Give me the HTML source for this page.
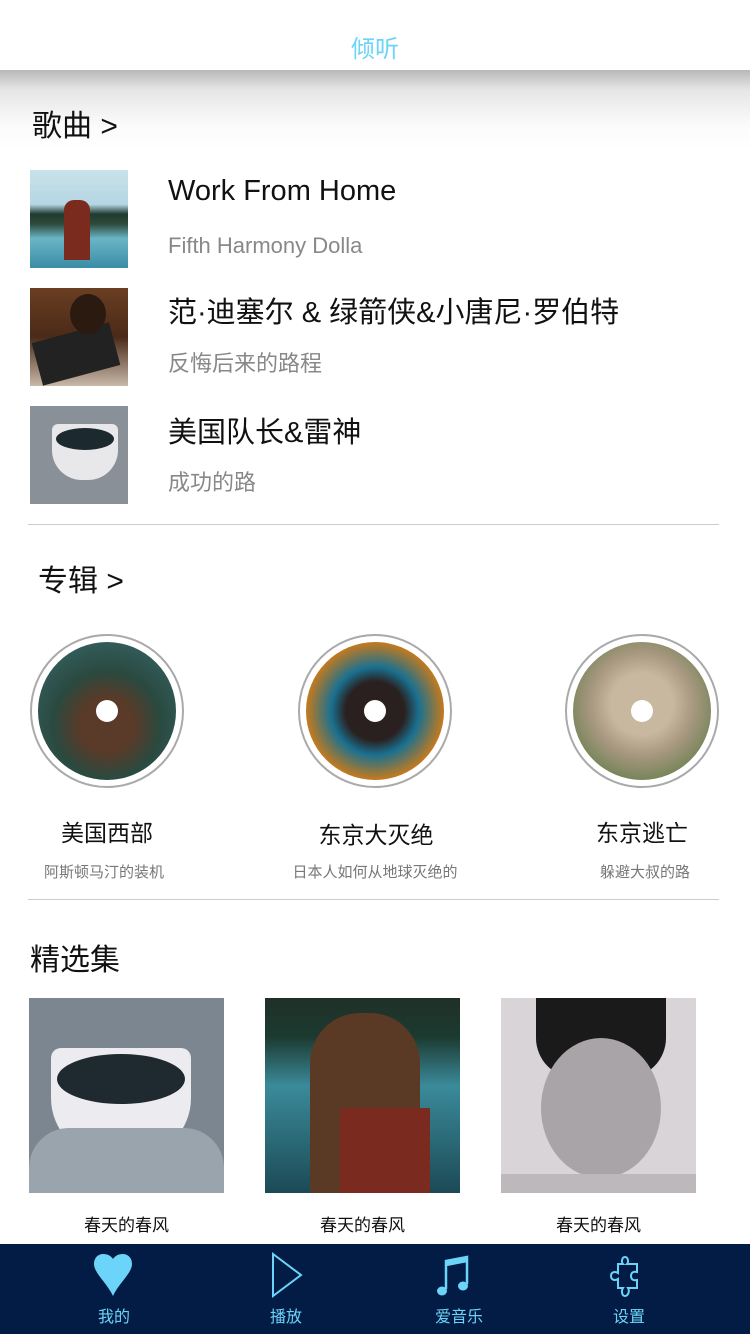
<!DOCTYPE html>
<html><head><meta charset="utf-8"><style>
*{margin:0;padding:0;box-sizing:border-box}
body{width:750px;height:1334px;position:relative;overflow:hidden;background:#fff;font-family:"Liberation Sans","Noto Sans CJK SC",sans-serif;color:#111}
.a{position:absolute}
.top{left:0;top:0;width:750px;height:70px;background:#fff;text-align:center;color:#6cd4f8;font-size:24px;line-height:100px}
.shade{left:0;top:70px;width:750px;height:80px;background:linear-gradient(#b8b8b8,#e6e6e6 25%,#fbfbfb 70%,#fff)}
.h{font-size:30px;color:#111}
.thumb{width:98px;height:98px;left:30px}
.t1{font-size:29px;color:#111;left:168px}
.t2{font-size:22px;color:#888;left:168px}
.line{left:28px;width:691px;height:1px;background:#ccc}
.circ{width:154px;height:154px;border-radius:50%;border:2px solid #aaa;background:#fff}
.circ i{position:absolute;left:6px;top:6px;width:138px;height:138px;border-radius:50%}
.circ b{position:absolute;left:64px;top:64px;width:22px;height:22px;border-radius:50%;background:#fff}
.an{font-size:23px;color:#111;text-align:center;width:200px}
.as{font-size:15px;color:#777;text-align:center;width:240px}
.sq{width:195px;height:195px;top:998px}
.sl{font-size:17px;color:#111;text-align:center;width:195px;top:1211px}
.nav{left:0;top:1244px;width:750px;height:90px;background:#021c45}
.nl{color:#6cd4f8;font-size:16px;top:1303px;width:80px;text-align:center}
</style></head><body>
<div class="a top">倾听</div>
<div class="a shade"></div>
<div class="a h" style="left:32px;top:101px">歌曲 &gt;</div>

<div class="a thumb" style="top:170px;background:linear-gradient(#c9e2ea 0,#b5d6e3 35%,#1f3a2e 45%,#2d4a3a 55%,#6ab5c7 70%,#3a8da5 100%)"><div class="a" style="left:34px;top:30px;width:26px;height:60px;background:#7a2b1e;border-radius:10px 10px 0 0"></div></div>
<div class="a t1" style="top:175px">Work From Home</div>
<div class="a t2" style="top:233px">Fifth Harmony Dolla</div>

<div class="a thumb" style="top:288px;background:linear-gradient(#6a3e22,#4a2a18 50%,#c8b8a8)"><div class="a" style="left:6px;top:44px;width:80px;height:44px;background:#222;transform:rotate(-15deg)"></div><div class="a" style="left:40px;top:6px;width:36px;height:40px;background:#2a1a10;border-radius:50%"></div></div>
<div class="a t1" style="top:289px">范·迪塞尔 &amp; 绿箭侠&amp;小唐尼·罗伯特</div>
<div class="a t2" style="top:346px">反悔后来的路程</div>

<div class="a thumb" style="top:406px;background:#8a9098"><div class="a" style="left:22px;top:18px;width:66px;height:56px;background:#e8e8ea;border-radius:6px 6px 30px 30px"></div><div class="a" style="left:26px;top:22px;width:58px;height:22px;background:#1c2a30;border-radius:50%"></div></div>
<div class="a t1" style="top:409px">美国队长&amp;雷神</div>
<div class="a t2" style="top:465px">成功的路</div>

<div class="a line" style="top:524px"></div>
<div class="a h" style="left:38px;top:556px">专辑 &gt;</div>

<div class="a circ" style="left:30px;top:634px"><i style="background:radial-gradient(circle at 50% 60%,#5a3a28 25%,#2a4a40 50%,#3a6a70)"></i><b></b></div>
<div class="a circ" style="left:298px;top:634px"><i style="background:radial-gradient(circle at 50% 50%,#2a2020 30%,#1a7090 45%,#c07a20 70%,#0e3a50)"></i><b></b></div>
<div class="a circ" style="left:565px;top:634px"><i style="background:radial-gradient(circle at 50% 45%,#c8b8a0 30%,#a89880 50%,#6a8050 80%)"></i><b></b></div>

<div class="a an" style="left:7px;top:814px">美国西部</div>
<div class="a an" style="left:276px;top:816px">东京大灭绝</div>
<div class="a an" style="left:542px;top:814px">东京逃亡</div>
<div class="a as" style="left:-16px;top:861px">阿斯顿马汀的装机</div>
<div class="a as" style="left:255px;top:861px">日本人如何从地球灭绝的</div>
<div class="a as" style="left:525px;top:861px">躲避大叔的路</div>

<div class="a line" style="top:899px"></div>
<div class="a h" style="left:30px;top:935px">精选集</div>

<div class="a sq" style="left:29px;background:#7c8690"><div class="a" style="left:22px;top:50px;width:140px;height:110px;background:#ecebef;border-radius:10px 10px 60px 60px"></div><div class="a" style="left:28px;top:56px;width:128px;height:50px;background:#1e2a30;border-radius:50%"></div><div class="a" style="left:0;top:130px;width:195px;height:65px;background:#9aa4ac;border-radius:40px 40px 0 0"></div></div>
<div class="a sq" style="left:265px;background:linear-gradient(#203028 0,#1c3a30 20%,#3a8a9a 45%,#1c4a55 100%)"><div class="a" style="left:45px;top:15px;width:110px;height:180px;background:#5a3a24;border-radius:50px 50px 0 0"></div><div class="a" style="left:75px;top:110px;width:90px;height:85px;background:#7a2a1e"></div></div>
<div class="a sq" style="left:501px;background:#d8d4d8"><div class="a" style="left:35px;top:0;width:130px;height:80px;background:#1a1a1a;border-radius:0 0 40px 40px"></div><div class="a" style="left:40px;top:40px;width:120px;height:140px;background:#a8a4a8;border-radius:50%"></div><div class="a" style="left:0;top:176px;width:195px;height:19px;background:#bdb8bc"></div></div>

<div class="a sl" style="left:29px">春天的春风</div>
<div class="a sl" style="left:265px">春天的春风</div>
<div class="a sl" style="left:501px">春天的春风</div>

<div class="a nav"></div>
<svg class="a" style="left:93px;top:1253px" width="40" height="44" viewBox="0 0 40 44"><path d="M20 43 C14 30 1 20 1 11 C1 4 6 1 10 1 C15 1 18 3 20 6 C22 3 25 1 30 1 C34 1 39 4 39 11 C39 20 26 30 20 43Z" fill="#6cd4f8"/></svg>
<svg class="a" style="left:270px;top:1252px" width="34" height="46" viewBox="0 0 34 46"><path d="M3 2 L31 23 L3 44 Z" fill="none" stroke="#6cd4f8" stroke-width="2"/></svg>
<svg class="a" style="left:436px;top:1254px" width="42" height="44" viewBox="0 0 42 44"><path d="M10 7 L10 35 M31 3 L31 30 M10 7 L31 3 L31 7 L10 11Z" stroke="#6cd4f8" stroke-width="2.5" fill="#6cd4f8"/><ellipse cx="6" cy="37" rx="5" ry="4.5" fill="#6cd4f8"/><ellipse cx="27" cy="32" rx="5" ry="4.5" fill="#6cd4f8"/></svg>
<svg class="a" style="left:606px;top:1254px" width="40" height="44" viewBox="0 0 40 44"><path d="M12 10 L17 10 C15 8 16 3 19 3 C22 3 23 8 21 10 L31 10 L31 18 C27 17 25 19 25 22 C25 25 27 27 31 26 L31 34 L22 34 C24 37 22 42 19 42 C16 42 15 37 17 34 L12 34 L12 25 C9 27 5 26 5 22 C5 18 9 17 12 19 Z" fill="none" stroke="#6cd4f8" stroke-width="2"/></svg>
<div class="a nl" style="left:74px">我的</div>
<div class="a nl" style="left:246px">播放</div>
<div class="a nl" style="left:419px">爱音乐</div>
<div class="a nl" style="left:589px">设置</div>
</body></html>
